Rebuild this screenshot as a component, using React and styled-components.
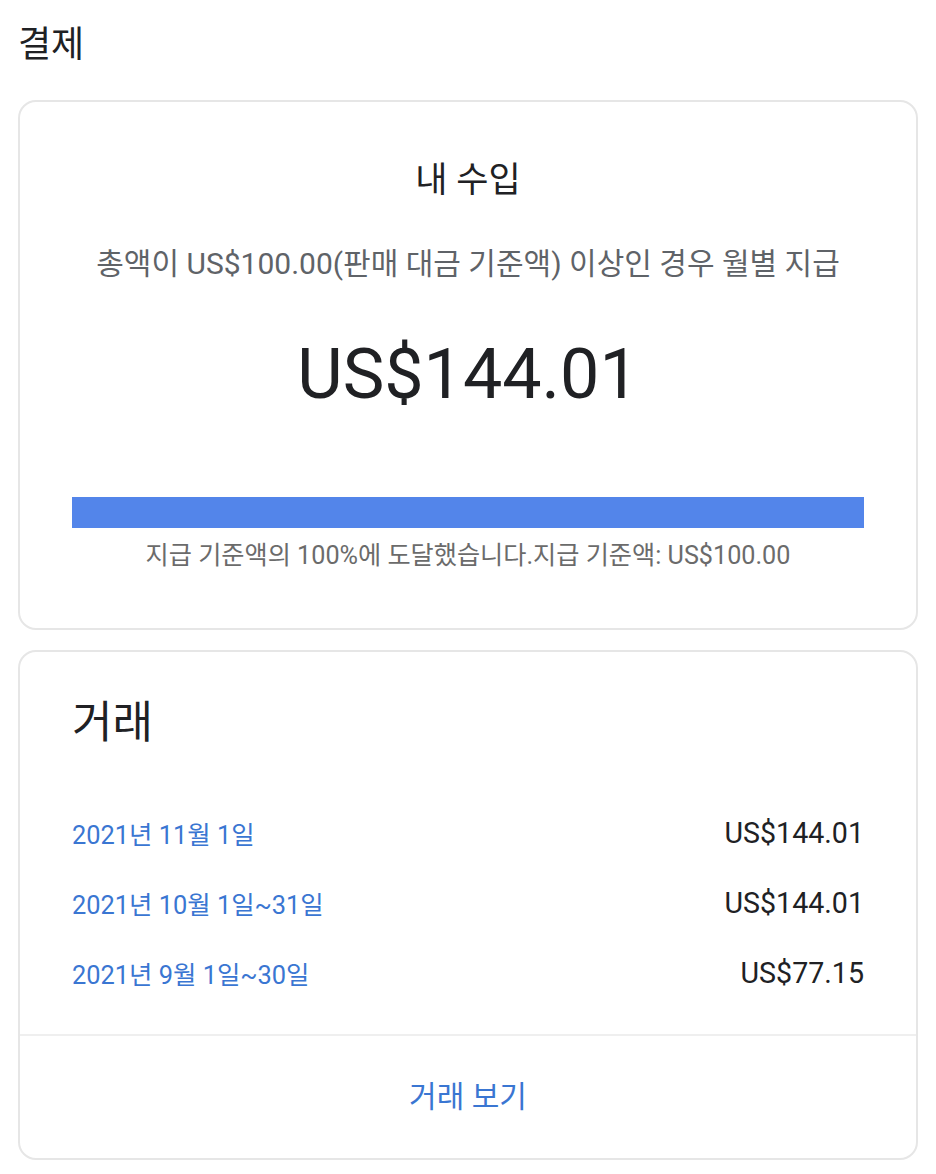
import React from "react";
import styled, { createGlobalStyle } from "styled-components";

const Global = createGlobalStyle`
  html, body { margin: 0; padding: 0; background: #ffffff; }
  body {
    font-family: Roboto, "Noto Sans CJK KR", "Noto Sans", sans-serif;
    color: #202124;
    -webkit-font-smoothing: antialiased;
  }
`;

const Page = styled.div`
  display: flex;
  flex-direction: column;
  padding: 0 18px 16px;
`;

const PageTitle = styled.h1`
  margin: 20px 0 30px;
  font-size: 36px;
  line-height: 50px;
  font-weight: 400;
  color: #202124;
`;

const Card = styled.section`
  display: flex;
  flex-direction: column;
  border: 2px solid #e6e6e6;
  border-radius: 18px;
  background: #fff;
  margin-bottom: 20px;
`;

const EarningsBody = styled.div`
  display: flex;
  flex-direction: column;
  align-items: center;
  padding: 57px 52px 54px;
`;

const CardHeading = styled.h2`
  margin: 0;
  font-size: 35px;
  line-height: 44px;
  font-weight: 400;
  color: #202124;
`;

const Subtitle = styled.p`
  margin: 41px 0 0;
  font-size: 30px;
  line-height: 40px;
  color: #5f6368;
  white-space: nowrap;
`;

const BigAmount = styled.div`
  margin-top: 45px;
  font-size: 70px;
  line-height: 90px;
  color: #202124;
`;

const Track = styled.div`
  align-self: stretch;
  margin-top: 78px;
  height: 31px;
  background: #e8eaed;
`;

const Fill = styled.div`
  height: 100%;
  background: #5385ea;
`;

const Caption = styled.p`
  margin: 10px 0 0;
  font-size: 25.2px;
  line-height: 36px;
  color: #6b6b6b;
`;

const TxBody = styled.div`
  display: flex;
  flex-direction: column;
  padding: 43px 52px 26px;
`;

const TxHeading = styled.h2`
  margin: 0 0 47px;
  font-size: 44px;
  line-height: 56px;
  font-weight: 400;
  color: #202124;
`;

const Row = styled.div`
  display: flex;
  justify-content: space-between;
  align-items: center;
  height: 70px;
`;

const DateLink = styled.a`
  font-size: 25.4px;
  color: #3a76d2;
  text-decoration: none;
`;

const RowAmount = styled.span`
  font-size: 28.6px;
  color: #202124;
`;

const Divider = styled.hr`
  margin: 0;
  border: 0;
  border-top: 2px solid #efefef;
`;

const Footer = styled.div`
  display: flex;
  justify-content: center;
  align-items: center;
  height: 122px;
  padding-bottom: 6px;
  box-sizing: border-box;
`;

const FooterLink = styled.a`
  font-size: 30px;
  color: #3a76d2;
  text-decoration: none;
`;

const rows = [
  { date: "2021년 11월 1일", amount: "US$144.01" },
  { date: "2021년 10월 1일~31일", amount: "US$144.01" },
  { date: "2021년 9월 1일~30일", amount: "US$77.15" },
];

export default function App() {
  const progress = 100;
  return (
    <>
      <Global />
      <Page>
        <PageTitle>결제</PageTitle>
        <Card>
          <EarningsBody>
            <CardHeading>내 수입</CardHeading>
            <Subtitle>총액이 US$100.00(판매 대금 기준액) 이상인 경우 월별 지급</Subtitle>
            <BigAmount>US$144.01</BigAmount>
            <Track>
              <Fill style={{ width: `${progress}%` }} />
            </Track>
            <Caption>지급 기준액의 100%에 도달했습니다.지급 기준액: US$100.00</Caption>
          </EarningsBody>
        </Card>
        <Card>
          <TxBody>
            <TxHeading>거래</TxHeading>
            {rows.map((r) => (
              <Row key={r.date}>
                <DateLink href="#">{r.date}</DateLink>
                <RowAmount>{r.amount}</RowAmount>
              </Row>
            ))}
          </TxBody>
          <Divider />
          <Footer>
            <FooterLink href="#">거래 보기</FooterLink>
          </Footer>
        </Card>
      </Page>
    </>
  );
}
